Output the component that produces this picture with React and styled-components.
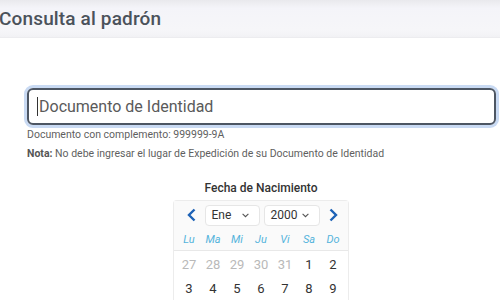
import React from "react";
import styled, { createGlobalStyle } from "styled-components";

const Global = createGlobalStyle`
  html, body { margin: 0; padding: 0; background: #fff; }
  body { font-family: Roboto, "Liberation Sans", sans-serif; width: 500px; height: 303px; overflow: hidden; }
  * { box-sizing: border-box; }
`;

const Header = styled.header`
  height: 38px;
  background: linear-gradient(#e9e9ed 0px, #f4f4f9 8px, #f6f6f9 30px, #f1f1f4 38px);
  border-bottom: 1px solid #ececef;
  display: flex;
  align-items: center;
`;

const Title = styled.h1`
  margin: 0 0 0 -1px;
  font-size: 19px;
  font-weight: 500;
  color: #4b525b;
  letter-spacing: 0.15px;
`;

const Main = styled.main`
  padding: 50px 4px 0 27px;
`;

const Field = styled.div`
  height: 37px;
  border: 2px solid #4d5663;
  border-radius: 6px;
  box-shadow: 0 0 0 3px #c9daf3;
  display: flex;
  align-items: center;
  padding-left: 8px;
`;

const Caret = styled.span`
  width: 1px;
  height: 19px;
  background: #333;
  margin-right: 1px;
`;

const Input = styled.input`
  border: none;
  outline: none;
  flex: 1;
  font-family: inherit;
  font-size: 16px;
  color: #333;
  background: transparent;
  padding: 0;
  &::placeholder { color: #5a5a5a; }
`;

const Help = styled.div`
  font-size: 10.5px;
  line-height: 14px;
  color: #5f5f5f;
  margin-top: ${(p) => p.$mt}px;
  b { font-weight: 700; color: #555; }
`;

const DateBlock = styled.div`
  width: 176px;
  margin: 19px 0 0 146px;
  display: flex;
  flex-direction: column;
  align-items: center;
`;

const Label = styled.div`
  font-size: 12px;
  font-weight: 500;
  color: #333;
  line-height: 16px;
  margin-bottom: 4px;
`;

const Calendar = styled.div`
  width: 176px;
  border: 1px solid #ececec;
  border-bottom: none;
  border-radius: 4px 4px 0 0;
  padding: 0 3px;
`;

const CalHead = styled.div`
  margin: 0 -3px;
  padding: 0 3px;
  background: #fafafa;
  border-bottom: 1px solid #e8e8e8;
`;

const Nav = styled.div`
  height: 28px;
  display: flex;
  align-items: center;
  justify-content: space-between;
  padding: 0 6px 0 8px;
`;

const Arrow = styled.button`
  border: none;
  background: none;
  padding: 0;
  width: 12px;
  height: 16px;
  display: flex;
  align-items: center;
  justify-content: center;
  color: #1d62b6;
`;

const Selects = styled.div`
  display: flex;
  gap: 4px;
`;

const Select = styled.div`
  width: ${(p) => p.$w}px;
  height: 21px;
  border: 1px solid #e6e6e6;
  border-radius: 4px;
  background: #fff;
  display: flex;
  align-items: center;
  justify-content: space-between;
  padding: 0 10px 0 6px;
  font-size: 12px;
  color: #333;
`;

const Grid = styled.div`
  display: grid;
  grid-template-columns: repeat(7, 24px);
`;

const WeekDay = styled.div`
  height: 21px;
  display: flex;
  align-items: center;
  justify-content: center;
  font-size: 11px;
  font-style: italic;
  color: #55b4dc;
`;

const Day = styled.div`
  height: 24px;
  display: flex;
  align-items: center;
  justify-content: center;
  font-size: 13px;
  color: ${(p) => (p.$out ? "#b9b9b9" : "#333")};
`;

const Days = styled(Grid)`
  padding-top: 1px;
`;

const Chevron = () => (
  <svg width="7" height="5" viewBox="0 0 7 5" fill="none">
    <path d="M0.6 0.8L3.5 3.7L6.4 0.8" stroke="#555" strokeWidth="1.1" />
  </svg>
);

const ArrowIcon = ({ dir }) => (
  <svg width="9" height="14" viewBox="0 0 9 14" fill="none">
    <path
      d={dir === "left" ? "M7.5 1.5L2 7l5.5 5.5" : "M1.5 1.5L7 7l-5.5 5.5"}
      stroke="currentColor"
      strokeWidth="2.4"
    />
  </svg>
);

const weekdays = ["Lu", "Ma", "Mi", "Ju", "Vi", "Sa", "Do"];
const days = [
  [27, true], [28, true], [29, true], [30, true], [31, true], [1], [2],
  [3], [4], [5], [6], [7], [8], [9],
];

export default function App() {
  return (
    <>
      <Global />
      <Header>
        <Title>Consulta al padrón</Title>
      </Header>
      <Main>
        <Field>
          <Caret />
          <Input placeholder="Documento de Identidad" />
        </Field>
        <Help $mt={3}>Documento con complemento: 999999-9A</Help>
        <Help $mt={5}>
          <b>Nota:</b> No debe ingresar el lugar de Expedición de su Documento de Identidad
        </Help>
        <DateBlock>
          <Label>Fecha de Nacimiento</Label>
          <Calendar>
            <CalHead>
              <Nav>
                <Arrow><ArrowIcon dir="left" /></Arrow>
                <Selects>
                  <Select $w={55}>Ene<Chevron /></Select>
                  <Select $w={56}>2000<Chevron /></Select>
                </Selects>
                <Arrow><ArrowIcon dir="right" /></Arrow>
              </Nav>
              <Grid>
                {weekdays.map((w) => (
                  <WeekDay key={w}>{w}</WeekDay>
                ))}
              </Grid>
            </CalHead>
            <Days>
              {days.map(([d, out], i) => (
                <Day key={i} $out={out}>{d}</Day>
              ))}
            </Days>
          </Calendar>
        </DateBlock>
      </Main>
    </>
  );
}
